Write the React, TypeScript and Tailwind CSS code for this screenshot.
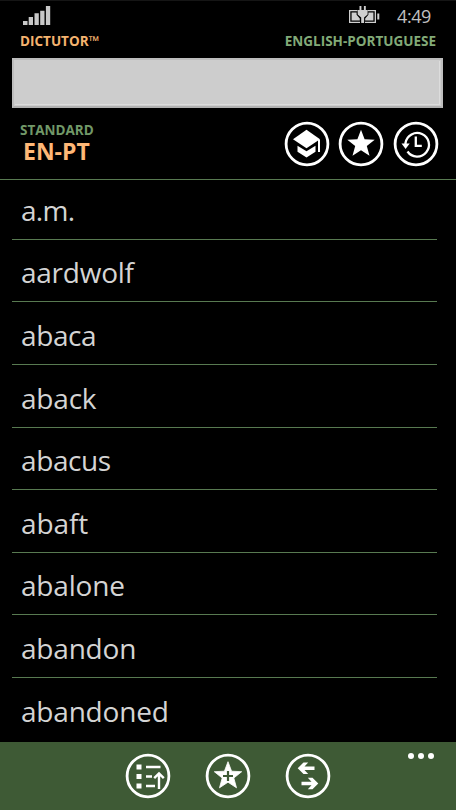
import React from 'react';

const words: { text: string; tracking: string }[] = [
  { text: 'a.m.', tracking: 'tracking-[-0.7px]' },
  { text: 'aardwolf', tracking: 'tracking-[-0.25px]' },
  { text: 'abaca', tracking: 'tracking-[-0.4px]' },
  { text: 'aback', tracking: 'tracking-[-0.2px]' },
  { text: 'abacus', tracking: 'tracking-[-0.4px]' },
  { text: 'abaft', tracking: 'tracking-[-0.1px]' },
  { text: 'abalone', tracking: 'tracking-[-0.2px]' },
  { text: 'abandon', tracking: 'tracking-[-0.2px]' },
  { text: 'abandoned', tracking: 'tracking-[-0.2px]' },
];

const STAR = 'M23 8.7 L26.6 18.2 L36.7 18.7 L28.8 25 L31.5 34.8 L23 29.2 L14.5 34.8 L17.2 25 L9.3 18.7 L19.4 18.2Z';

function Signal() {
  return (
    <svg width="28" height="19" viewBox="0 0 28 19" fill="#c8c8c8">
      <path d="M0 15h4.5v4H0zM5.700 11h4.300v8H5.700zM11.500 7.300h4.300V19h-4.300zM17.200 4.700h4.300V19h-4.300zM22.900 0h4.300v19h-4.300z" />
    </svg>
  );
}

function Battery() {
  return (
    <svg width="31" height="18" viewBox="0 0 31 18" fill="#cfcfcf">
      <path d="M0 4h8.500v1.300H1.300v10.400H11V17H0zM18.500 4H27v13H16v-1.300h9.700V5.300h-7.200zM28.300 7.600h2v5.800h-2z" />
      <path d="M2.600 6.500h5v2.200L10.800 12.500v2H2.600zM19.400 6.500h5v8h-8.200v-2l3.200-3.800z" />
      <path d="M10.500 0h1.900v4h2.500V0h1.900v4h1.800v4.500l-3.500 3V17h-2.900v-5.500l-3.500-3V4h1.800z" />
    </svg>
  );
}

function Ring({ label, children }: { label: string; children: React.ReactNode }) {
  return (
    <button aria-label={label} className="block size-[46px]">
      <svg viewBox="0 0 46 46" className="size-full" fill="none" stroke="#fff">
        <circle cx="23" cy="23" r="20.900" strokeWidth="2.800" />
        {children}
      </svg>
    </button>
  );
}

export default function App() {
  return (
    <main className="flex h-[810px] w-[456px] flex-col overflow-hidden border-t border-[#151515] bg-black font-['Open_Sans','Noto_Sans',sans-serif]">
      <header className="flex h-[179px] shrink-0 flex-col border-b border-[#587a51]">
        <div className="flex h-[31px] items-start justify-between pl-[23px] pr-[22px] pt-[5px]">
          <Signal />
          <div className="flex items-start">
            <Battery />
            <span className="ml-[17px] w-[37px] whitespace-nowrap text-[18px] font-normal leading-[20px] tracking-[-0.4px] text-[#c0c0c0]">4:49</span>
          </div>
        </div>
        <div className="flex h-[26px] justify-between pl-[20px] pr-[20px] text-[13.500px] font-bold leading-[19px]">
          <span className="text-[#f4b36f]">DICTUTOR™</span>
          <span className="text-[#82aa78]">ENGLISH-PORTUGUESE</span>
        </div>
        <div className="ml-[12px] h-[50px] w-[431px] shrink-0 border-2 border-[#bdbdbd] border-b-[#b0b0b0] bg-[#cdcdcd] p-px">
          <input aria-label="Search" className="block size-full border-b border-r border-[#dcdcdc] outline-none" />
        </div>
        <div className="flex justify-between pl-[20px] pr-[17.500px]">
          <div className="pt-[13px]">
            <p className="text-[13.500px] font-bold leading-[18px] text-[#719868]">STANDARD</p>
            <p className="pl-[3px] text-[23px] font-bold leading-[24px] text-[#ffb877]">EN-PT</p>
          </div>
          <div className="flex gap-[8.500px] pt-[13px]">
            <Ring label="Study">
              <path d="M22.500 8.700 36 18.200 22.500 27.200 9 18.200Z" fill="#fff" stroke="none" />
              <path d="M13.500 24.800 22.500 30.300 31.500 24.800V30.800L22.500 36.500 13.500 30.800Z" fill="#fff" stroke="none" />
              <path d="M35 18.500v12.500" strokeWidth="2" />
            </Ring>
            <Ring label="Favorites">
              <path d={STAR} fill="#fff" stroke="none" />
            </Ring>
            <Ring label="History">
              <path d="M12.500 25V22A11.800 11.800 0 1 1 14.500 30.500" strokeWidth="2.300" />
              <path d="M8.500 22.500h8.200l-4.100 5.500z" fill="#fff" stroke="none" />
              <path d="M22.800 15.500v9.300h6" strokeWidth="2.300" />
            </Ring>
          </div>
        </div>
      </header>

      <ul className="min-h-0 flex-1 overflow-hidden pl-[12px] pr-[19px]">
        {words.map((word, i) => (
          <li
            key={word.text}
            className={`flex items-end border-b border-[#587a51] pb-[10px] pl-[9px] last:border-transparent ${i === 0 ? 'h-[59.700px]' : 'h-[62.640px]'}`}
          >
            <span className={`text-[28px] font-normal leading-[38px] text-[#d4d4d4] ${word.tracking}`}>{word.text}</span>
          </li>
        ))}
      </ul>

      <footer className="grid h-[68px] shrink-0 grid-cols-[1fr_206px_1fr] bg-[#3e5a35]">
        <span />
        <div className="flex justify-between pt-[11px]">
          <Ring label="Sort">
            <path d="M11.500 11.500h5v5h-5zM11.500 21h5v5h-5zM11.500 30.500h5v5h-5z" fill="#fff" stroke="none" />
            <path d="M21 14h14.500M21 23.500h6M21 33h9M34 36V20.500M29.200 25.200l4.800-4.800 4.800 4.800" strokeWidth="2.400" />
          </Ring>
          <Ring label="Add favorite">
            <path d={STAR} fill="#fff" stroke="#fff" strokeWidth="0.800" />
            <path d="M23 18v10M18 23h10" stroke="#3e5a35" strokeWidth="2.200" />
          </Ring>
          <Ring label="Swap languages">
            <path d="M12.700 15.300 18.500 9.500H23.200L19.500 13.500H29.500V17.100H19.500L23.200 21.100H18.500ZM33.300 30.500 27.500 24.700H22.800L26.500 28.700H16.500V32.300H26.500L22.800 36.300H27.500Z" fill="#fff" stroke="none" />
          </Ring>
        </div>
        <button aria-label="More" className="flex h-fit justify-end gap-[3.500px] pr-[22px] pt-[10.500px]">
          <span className="size-[6.500px] rounded-full bg-white" />
          <span className="size-[6.500px] rounded-full bg-white" />
          <span className="size-[6.500px] rounded-full bg-white" />
        </button>
      </footer>
    </main>
  );
}
